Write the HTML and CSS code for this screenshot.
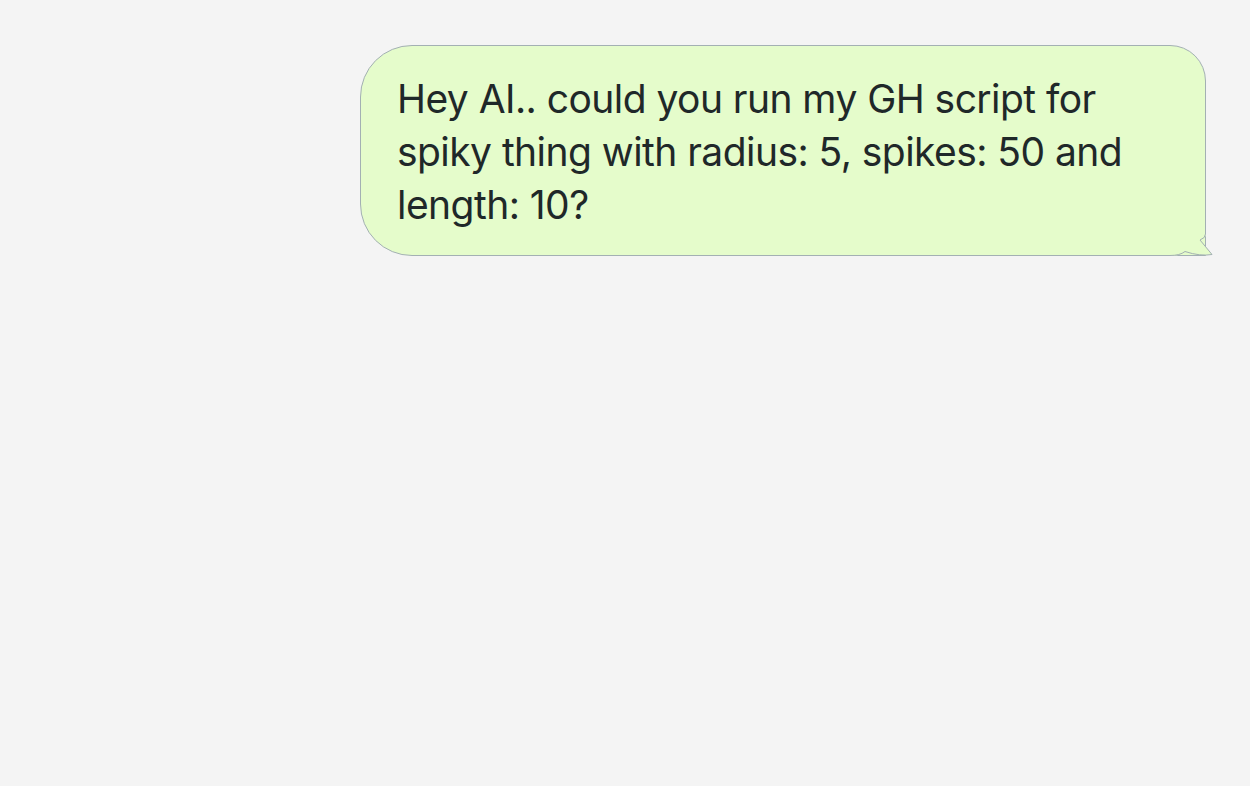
FILE: index.html
```html
<!DOCTYPE html>
<html>
<head>
<meta charset="utf-8">
<link rel="stylesheet" href="styles.css">
</head>
<body>
<div class="chat">
  <div class="bubble">
    <p class="text">Hey AI.. could you run my GH script for spiky thing with radius: 5, spikes: 50 and length: 10?</p>
    <svg class="tail" width="44" height="33" viewBox="0 0 44 33">
      <path d="M0 0 H36 V9 Q36 13 30.5 15 L42 29.5 Q30 31.5 15 27 Q10 31 0 31 Z" fill="#e5fccb"/>
      <path d="M35.5 0 V9 Q35.5 13 30 15 L42 29.5 Q30 31.5 15 26.5 Q10 30.5 0 30.5" fill="none" stroke="#a3b0b3" stroke-width="1"/>
    </svg>
  </div>
</div>
</body>
</html>
```
FILE: styles.css
```css
html, body {
  margin: 0;
  padding: 0;
  background: #f4f4f4;
}
.chat {
  display: flex;
  justify-content: flex-end;
  padding: 45px 44px 0 0;
}
.bubble {
  position: relative;
  box-sizing: border-box;
  width: 846px;
  height: 211px;
  background: #e5fccb;
  border: 1px solid #a3b0b3;
  border-radius: 52px 36px 0 52px;
  padding: 26px 40px 0 36px;
}
.text {
  margin: 0;
  font-family: Inter, "Noto Sans", sans-serif;
  font-size: 39px;
  letter-spacing: -0.55px;
  line-height: 53px;
  color: #1f2829;
}
.tail {
  position: absolute;
  right: -9px;
  bottom: -3px;
  display: block;
}
```
